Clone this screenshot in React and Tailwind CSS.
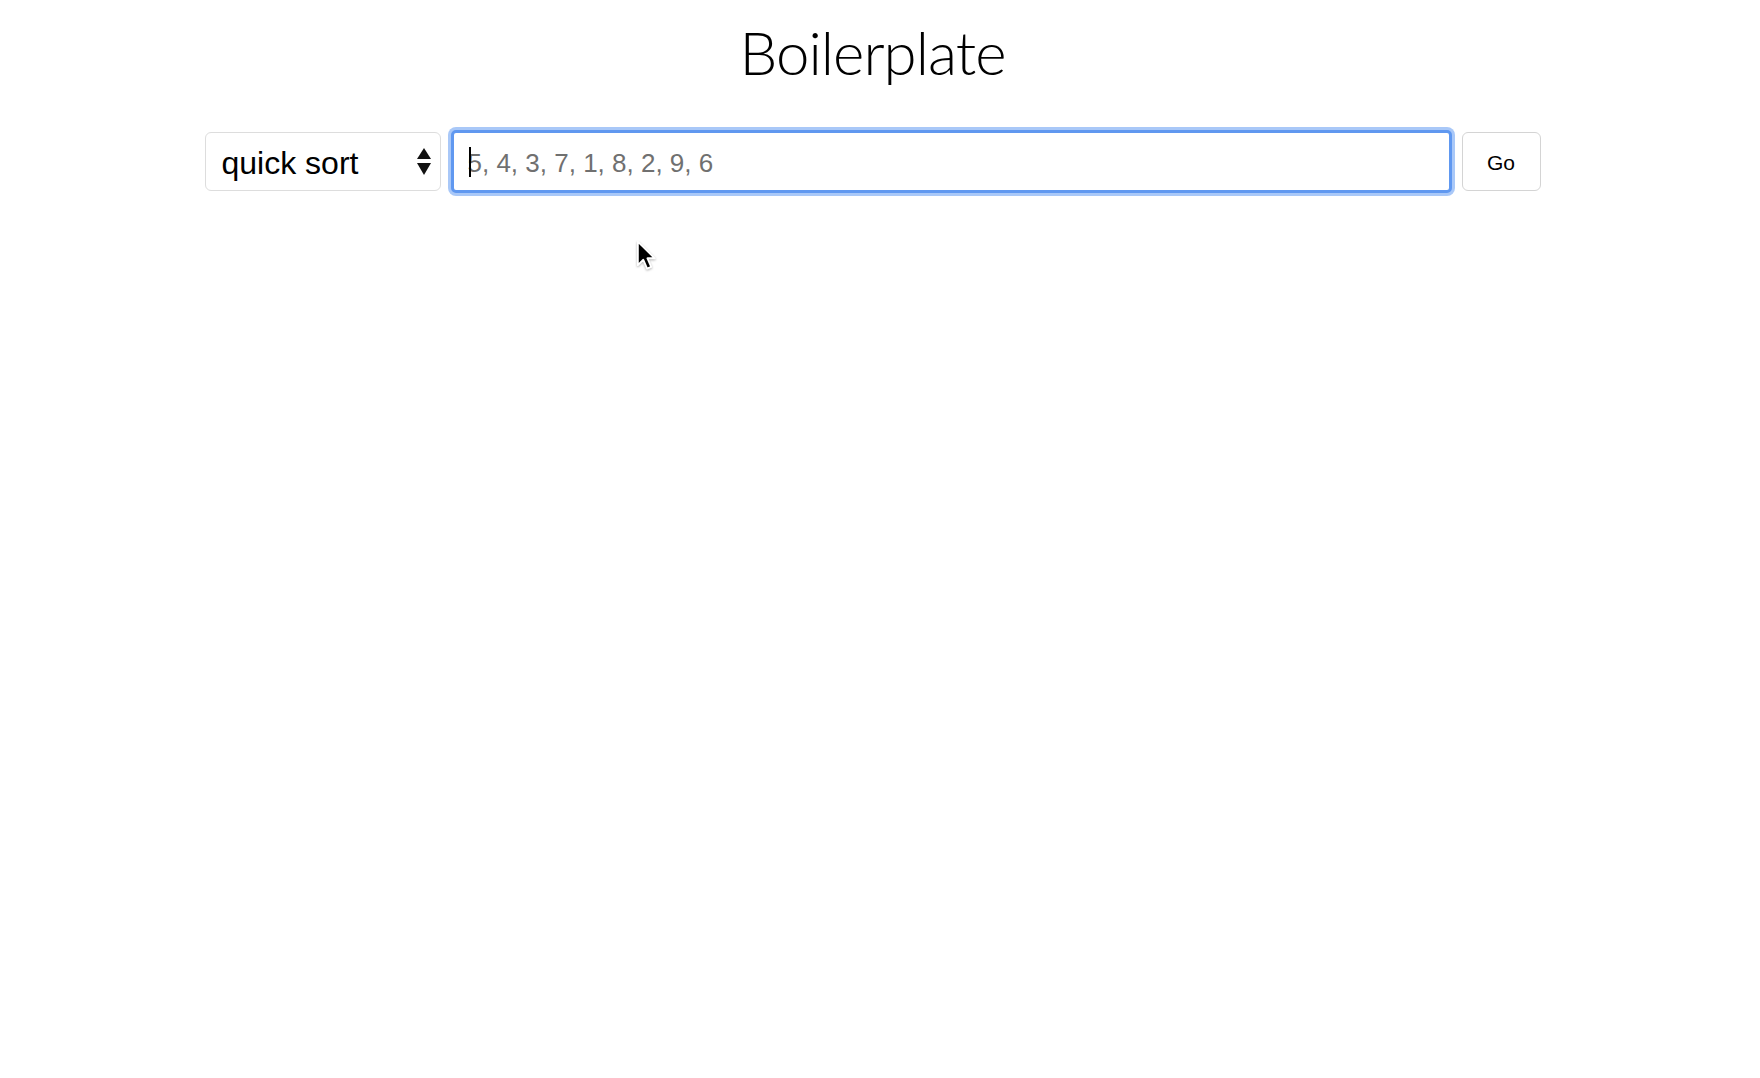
import React, { useState } from "react";

const SortForm = () => {
  const [algo, setAlgo] = useState("quick");
  const [values, setValues] = useState("");

  return (
    <div className="flex items-center justify-center gap-[10px] mt-[48px]">
      <div className="relative">
        <select
          value={algo}
          onChange={(e) => setAlgo(e.target.value)}
          className="appearance-none w-[236px] h-[59px] bg-white border border-[#dddddd] rounded-[6px] pl-[16px] pt-[2px] text-[32px] text-black outline-none"
          style={{ fontFamily: '"Liberation Sans", Arial, sans-serif' }}
        >
          <option value="quick">quick sort</option>
          <option value="merge">merge sort</option>
          <option value="bubble">bubble sort</option>
        </select>
        <svg
          className="absolute right-[10px] top-[16px] pointer-events-none"
          width="14"
          height="27"
          viewBox="0 0 14 27"
        >
          <path d="M7 0 L14 11 L0 11 Z" fill="#111" />
          <path d="M0 15 L14 15 L7 27 Z" fill="#111" />
        </svg>
      </div>
      <div className="relative">
        <input
          value={values}
          onChange={(e) => setValues(e.target.value)}
          type="text"
          placeholder="5, 4, 3, 7, 1, 8, 2, 9, 6"
          className="block w-[1001px] h-[63px] bg-white border-[3px] border-[#6098f0] rounded-[5px] pl-[14px] pt-[3px] text-[26px] text-black placeholder:text-[#707070] outline-none shadow-[0_0_0_3px_#a9c8f8]"
          style={{ fontFamily: '"Liberation Sans", Arial, sans-serif' }}
        />
        <div className="absolute left-[18px] top-[17px] w-[2px] h-[30px] bg-black pointer-events-none" />
      </div>
      <button
        className="w-[79px] h-[59px] bg-white border border-[#d4d4d4] rounded-[6px] pt-[2px] text-[21px] text-black"
        style={{ fontFamily: '"Liberation Sans", Arial, sans-serif' }}
      >
        Go
      </button>
    </div>
  );
};

const Cursor = () => (
  <svg
    className="absolute left-[636px] top-[240px] pointer-events-none drop-shadow-[0_1px_1px_rgba(0,0,0,0.3)]"
    width="22"
    height="32"
    viewBox="0 0 19 28"
  >
    <path
      d="M1.5 1.5 L1.5 22 L6.3 17.3 L9.6 25 L13.2 23.5 L9.9 16 L16.3 16 Z"
      fill="#000"
      stroke="#fff"
      strokeWidth="1.6"
      strokeLinejoin="round"
    />
  </svg>
);

export default function App() {
  return (
    <div className="relative min-h-[1078px] bg-white pr-[15px]">
      <h1
        className="text-center text-[60px] font-light tracking-[-1px] text-black leading-none pt-[22px]"
        style={{ fontFamily: 'Lato, "Open Sans", sans-serif' }}
      >
        Boilerplate
      </h1>
      <SortForm />
      <Cursor />
    </div>
  );
}
